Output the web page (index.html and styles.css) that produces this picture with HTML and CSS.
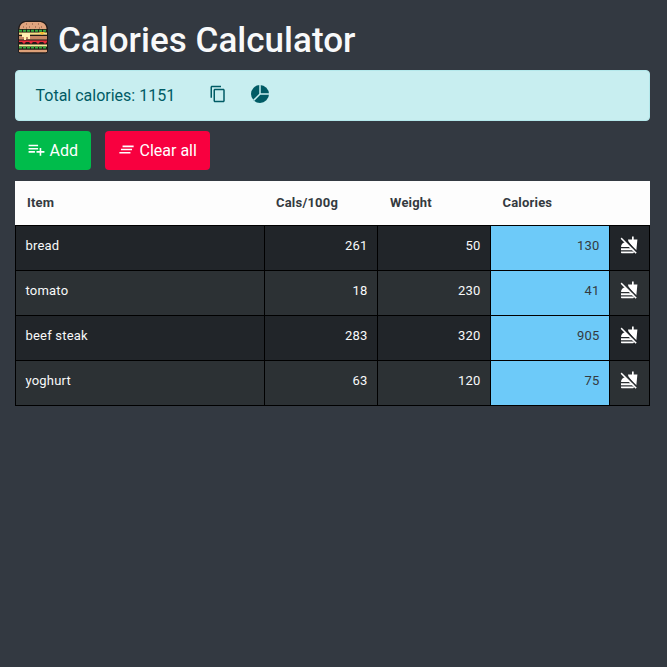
FILE: index.html
```html
<!DOCTYPE html>
<html lang="en">
<head>
<meta charset="utf-8">
<title>Calories Calculator</title>
<link rel="stylesheet" href="styles.css">
</head>
<body>
<svg class="defs" aria-hidden="true">
  <symbol id="no-food" viewBox="0 0 18 18">
    <path d="M1 15.600h12.800v.9q0 .8-.8.8H1.800q-.8 0-.8-.8zM1 12.300h12.800v2H1zM1 11c0-2.600 1.800-4.500 4.200-4.800L10.500 11z"/>
    <path d="M8.300 5.200 8 3.500h4V.4h1.700v3.100h3.700l-1.100 11.300L13 11.500z"/>
    <path class="slash" d="M1.200 2.200 16.200 17.200"/>
    <path class="slash-gap" d="M2.200 1.100 17.200 16.100"/>
  </symbol>
</svg>
<header class="title">
  <svg class="burger" viewBox="0 0 32 34">
    <path d="M1 10C1 4 5 .7 10 .7h12c5 0 9 3.300 9 9.300v20c0 2.500-1 3.500-3.500 3.500h-23C2 33.500 1 32.500 1 30z" fill="#211b19"/>
    <path d="M2.500 9C2.500 4.500 6 2 10 2h12c4 0 7.500 2.500 7.500 7z" fill="#e0a47e"/>
    <path d="M6 7h1m2-3h1m2 3h1m2-3h1m2 3h1m2-3h1m2 3h1M9 8h1m12 0h1" stroke="#6b3e2c" stroke-width=".8" fill="none"/>
    <path d="M2 10.800h28" stroke="#38ad40" stroke-width="2" stroke-dasharray="3 1"/>
    <path d="M2 12.500h28v2.200H2z" fill="#f8dd83"/>
    <path d="M2 16h28v3.500H2z" fill="#c78764"/>
    <path d="M5 13h8v6h-2v-2H9v3H7v-3H5z" fill="#fff0b1"/>
    <path d="m22 12 3 3 3-3" fill="#f6b92e"/>
    <path d="M2 20.500h28v1.500l-2 2-2-2h-3l-2 2-2-2h-3l-2 2-2-2h-3l-2 2-2-2H2z" fill="#e82c3b"/>
    <path d="M2 25.500h28" stroke="#ffe99a" stroke-width="2"/>
    <path d="M2 27.500h28" stroke="#38ad40" stroke-width="1.800" stroke-dasharray="3 1"/>
    <path d="M2 29.800h28v1.500l-1 1H3l-1-1z" fill="#dda078"/>
  </svg>
  <h1>Calories Calculator</h1>
</header>
<section class="summary">
  <span class="total">Total calories: 1151</span>
  <svg class="copy" viewBox="0 0 24 24"><path d="M16 1H4c-1.100 0-2 .9-2 2v14h2V3h12V1zm3 4H8c-1.100 0-2 .9-2 2v14c0 1.100.9 2 2 2h11c1.100 0 2-.9 2-2V7c0-1.100-.9-2-2-2zm0 16H8V7h11v14z"/></svg>
  <svg class="pie" viewBox="0 0 18 18"><circle cx="9" cy="9" r="9"/><path d="M9 0v9h9M9 9l-6.400 6.400"/></svg>
</section>
<div class="actions">
  <button class="btn add"><svg viewBox="0 0 24 24"><path d="M14 10H2v2h12v-2zm0-4H2v2h12V6zm4 8v-4h-2v4h-4v2h4v4h2v-4h4v-2h-4zM2 16h8v-2H2v2z"/></svg>Add</button>
  <button class="btn clear"><svg viewBox="0 0 24 24"><path d="M5 13h14v-2H5v2zm-2 4h14v-2H3v2zM7 7v2h14V7H7z"/></svg>Clear all</button>
</div>
<table>
  <colgroup><col class="c-item"><col class="c-num"><col class="c-num"><col class="c-cal"><col class="c-del"></colgroup>
  <thead><tr><th>Item</th><th>Cals/100g</th><th>Weight</th><th>Calories</th><th></th></tr></thead>
  <tbody>
    <tr><td>bread</td><td>261</td><td>50</td><td class="cal">130</td><td class="del"><svg><use href="#no-food"/></svg></td></tr>
    <tr><td>tomato</td><td>18</td><td>230</td><td class="cal">41</td><td class="del"><svg><use href="#no-food"/></svg></td></tr>
    <tr><td>beef steak</td><td>283</td><td>320</td><td class="cal">905</td><td class="del"><svg><use href="#no-food"/></svg></td></tr>
    <tr><td>yoghurt</td><td>63</td><td>120</td><td class="cal">75</td><td class="del"><svg><use href="#no-food"/></svg></td></tr>
  </tbody>
</table>
</body>
</html>
```
FILE: styles.css
```css
* { box-sizing: border-box; }
body {
  margin: 0;
  padding: 20px 17px 0 15px;
  height: 667px;
  background: #333941;
  color: #f8f9fa;
  font: 16px/24px Roboto, sans-serif;
}
svg { display: block; flex: none; fill: currentColor; }
.defs { position: absolute; width: 0; height: 0; }
.title { display: flex; height: 50px; }
.burger { width: 32px; height: 34px; margin: 0 9px 0 2px; }
h1 { margin: 0; font-size: 35px; line-height: 42px; font-weight: 500; letter-spacing: .03px; white-space: nowrap; }
.summary {
  display: flex;
  height: 51px;
  padding: 13px 19.500px;
  border: 1px solid #b4e8eb;
  border-radius: 4px;
  background: #c8eef0;
  color: #005b65;
}
.total { width: 173.500px; }
.copy { width: 18px; height: 18px; margin-top: 1px; }
.pie { width: 18px; height: 18px; margin: 1px 0 0 24px; }
.pie path { fill: none; stroke: #c8eef0; stroke-width: 1.5; }
.actions { display: flex; gap: 14px; padding: 10px 0 11px; }
.btn {
  display: flex;
  align-items: center;
  height: 39px;
  padding: 1px 12px 0 12px;
  border: 0;
  border-radius: 4px;
  color: #fff;
  font: 16px/24px Roboto, sans-serif;
  white-space: nowrap;
}
.btn svg { width: 19px; height: 19px; margin: 0 3.500px 3px 0; }
.add { width: 76px; background: #00bc4b; }
.clear { width: 105px; background: #f8003f; }
table {
  width: 635px;
  table-layout: fixed;
  border-collapse: separate;
  border-spacing: 0;
  font-size: 13px;
  line-height: 20px;
  letter-spacing: .2px;
}
.c-item { width: 250px; }
.c-num { width: 113px; }
.c-cal { width: 119px; }
.c-del { width: 40px; }
th { height: 44px; padding: 0 12px; background: #fdfdfd; color: #343a40; text-align: left; font-weight: 700; }
th:nth-child(2) { padding-left: 11px; }
th:nth-child(n+4) { padding-left: 11.500px; }
td { height: 45px; padding: 0 9.500px 4px; border-top: 1px solid #000; border-right: 1px solid #000; text-align: right; }
td:first-child { border-left: 1px solid #000; text-align: left; }
tbody tr { --row: #212529; background: var(--row); }
tbody tr:nth-child(even) { --row: #2c3134; }
tbody tr:last-child td { height: 46px; border-bottom: 1px solid #000; }
td.cal { background: #6dcaf9; color: #343a40; }
td.del { padding: 0 0 6px 10px; color: #fff; }
.del svg { width: 18px; height: 18px; }
.slash { fill: none; stroke: #fff; stroke-width: 1.7; }
.slash-gap { fill: none; stroke: var(--row); stroke-width: 1.4; }
```
